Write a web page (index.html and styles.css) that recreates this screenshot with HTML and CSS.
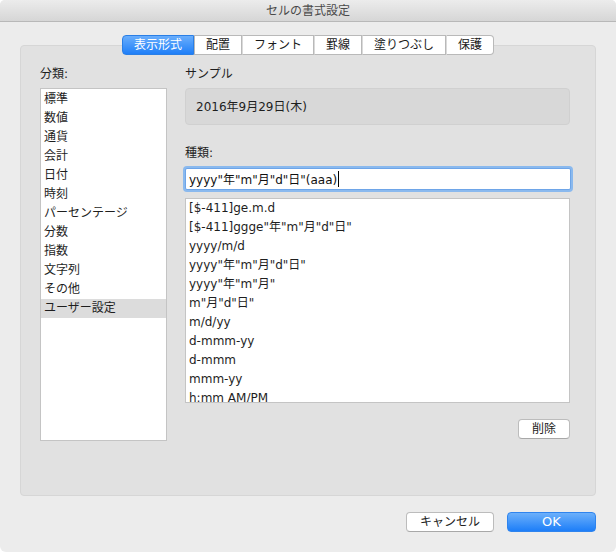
FILE: index.html
```html
<!DOCTYPE html>
<html lang="ja">

<head>
  <meta charset="UTF-8" />
  <title>セルの書式設定</title>
  <link rel="stylesheet" href="styles.css">
</head>

<body>
  <div class="window">
    <div class="titlebar">セルの書式設定</div>

    <div class="content">
      <div class="tabs">
        <div class="tab active">表示形式</div>
        <div class="tab">配置</div>
        <div class="tab">フォント</div>
        <div class="tab">罫線</div>
        <div class="tab">塗りつぶし</div>
        <div class="tab">保護</div>
      </div>

      <div class="panel">
        <div class="left">
          <div class="label">分類:</div>
          <ul class="list category">
            <li>標準</li>
            <li>数値</li>
            <li>通貨</li>
            <li>会計</li>
            <li>日付</li>
            <li>時刻</li>
            <li>パーセンテージ</li>
            <li>分数</li>
            <li>指数</li>
            <li>文字列</li>
            <li>その他</li>
            <li class="selected">ユーザー設定</li>
          </ul>
        </div>

        <div class="right">
          <div class="label">サンプル</div>
          <div class="sample">2016年9月29日(木)</div>

          <div class="label kind">種類:</div>
          <div class="input">yyyy"年"m"月"d"日"(aaa)<span class="caret"></span></div>

          <ul class="list formats">
            <li>[$-411]ge.m.d</li>
            <li>[$-411]ggge"年"m"月"d"日"</li>
            <li>yyyy/m/d</li>
            <li>yyyy"年"m"月"d"日"</li>
            <li>yyyy"年"m"月"</li>
            <li>m"月"d"日"</li>
            <li>m/d/yy</li>
            <li>d-mmm-yy</li>
            <li>d-mmm</li>
            <li>mmm-yy</li>
            <li>h:mm AM/PM</li>
          </ul>

          <div class="row-end">
            <button class="btn">削除</button>
          </div>
        </div>
      </div>

      <div class="footer">
        <button class="btn wide">キャンセル</button>
        <button class="btn primary">OK</button>
      </div>
    </div>
  </div>
</body>

</html>
```

FILE: styles.css
```css
body {
  margin: 0;
  padding: 0;
  background-color: #fff;
  font-family: "DejaVu Sans", "Noto Sans CJK JP", sans-serif;
  font-size: 12px;
  color: #1e1e1e;
}

.window {
  width: 616px;
  height: 552px;
  background-color: #ececec;
  border-radius: 5px 5px 6px 6px;
  overflow: hidden;
}

.titlebar {
  height: 21px;
  line-height: 22px;
  text-align: center;
  color: #4a4a4a;
  background: linear-gradient(#ececec, #d6d6d6);
  border-bottom: 1px solid #b8b8b8;
}

.content {
  padding: 13px 20px 0 20px;
}

.tabs {
  display: flex;
  justify-content: center;
  margin-bottom: -10px;
  position: relative;
  z-index: 1;
}

.tab {
  height: 18px;
  line-height: 19px;
  padding: 0 11px;
  background-color: #fff;
  border: 1px solid #b9b9b9;
  border-left: 1px solid #dadada;
  color: #1a1a1a;
}

.tab:first-child {
  border-left: 1px solid #b9b9b9;
  border-radius: 4px 0 0 4px;
}

.tab:last-child {
  border-radius: 0 4px 4px 0;
}

.tab.active {
  background: linear-gradient(#6aaefc, #1f7ff8);
  border-color: #2a7fe6;
  color: #fff;
}

.tab.active + .tab {
  border-left-color: #b9b9b9;
}

.panel {
  display: flex;
  height: 429px;
  padding: 20px 24px 0 19px;
  background-color: #e1e1e1;
  border: 1px solid #d6d6d6;
  border-radius: 4px;
}

.label {
  height: 16px;
  line-height: 16px;
  margin-bottom: 6px;
}

.left {
  width: 127px;
  margin-right: 18px;
}

.right {
  flex: 1;
}

.list {
  list-style: none;
  margin: 0;
  padding: 0;
  background-color: #fff;
  border: 1px solid #c4c4c4;
  overflow: hidden;
}

.list li {
  height: 19px;
  line-height: 19px;
  white-space: nowrap;
}

.category {
  height: 350px;
  padding-top: 1px;
}

.category li {
  padding-left: 3px;
}

.category li.selected {
  background-color: #dcdcdc;
}

.sample {
  height: 35px;
  line-height: 36px;
  padding-left: 10px;
  background-color: #d8d8d8;
  border: 1px solid #d0d0d0;
  border-radius: 4px;
  margin-right: 1px;
}

.kind {
  margin-top: 20px;
  margin-bottom: 7px;
}

.input {
  height: 20px;
  line-height: 23px;
  padding-left: 3px;
  background-color: #fff;
  border: 1px solid #6ea5e8;
  box-shadow: 0 0 0 2px #8ab9ee;
  border-radius: 2px;
  color: #111;
}

.caret {
  display: inline-block;
  width: 1px;
  height: 16px;
  margin-left: 1px;
  vertical-align: -3px;
  background-color: #000;
}

.formats {
  height: 203px;
  margin-top: 8px;
  margin-right: 1px;
}

.formats li {
  padding-left: 3px;
}

.row-end {
  display: flex;
  justify-content: flex-end;
  margin-top: 16px;
  margin-right: 1px;
}

.btn {
  height: 20px;
  padding: 0;
  width: 52px;
  font-family: inherit;
  font-size: 12px;
  line-height: 18px;
  color: #222;
  background-color: #fff;
  border: 1px solid #bcbcbc;
  border-bottom-color: #a8a8a8;
  border-radius: 4px;
}

.footer {
  display: flex;
  justify-content: flex-end;
  gap: 13px;
  margin-top: 16px;
}

.btn.wide {
  width: 88px;
}

.btn.primary {
  width: 89px;
  font-size: 13px;
  color: #fff;
  background: linear-gradient(#6cb0fb, #1d7ef8);
  border: 1px solid #2f84ee;
}
```
